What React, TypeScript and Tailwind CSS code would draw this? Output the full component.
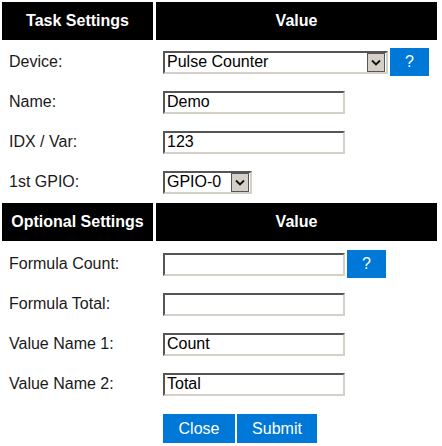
import type { ReactNode } from 'react'

const inset =
   'border-2 border-t-[#555] border-l-[#555] border-b-[#d4d0c8] border-r-[#d4d0c8] bg-white'

function Header({ left }: { left: string }) {
  return (
    <div className="grid grid-cols-[151px_281px] gap-x-[3px] h-[38px]">
      <div className="bg-black text-white font-bold flex items-center justify-center">{left}</div>
      <div className="bg-black text-white font-bold flex items-center justify-center">Value</div>
    </div>
  )
}

function Row({ label, children }: { label: string; children: ReactNode }) {
  return (
    <div className="grid grid-cols-[151px_281px] gap-x-[3px] h-[40px]">
      <div className="flex items-center px-[7px] text-[#1a1a1a]">{label}</div>
      <div className="flex items-center px-[7px]">{children}</div>
    </div>
  )
}

function TextBox({ value = '' }: { value?: string }) {
  return (
    <input
      readOnly
      value={value}
      className={`${inset} w-[182px] h-[23px] px-[2px] text-[16px] text-black outline-none`}
    />
  )
}

function Chevron() {
  return (
    <svg width="10" height="7" viewBox="0 0 10 7">
      <path d="M1 1.5 L5 5.5 L9 1.5" fill="none" stroke="#111" strokeWidth="1.8" />
    </svg>
  )
}

function Select({ value, width }: { value: string; width: string }) {
  return (
    <div className={`${inset} ${width} h-[23px] flex items-center justify-between`}>
      <span className="pl-[2px] text-black leading-none">{value}</span>
      <div className="w-[18px] h-[19px] mr-[1px] bg-[#d4d0c8] border border-[#555] flex items-center justify-center">
        <Chevron />
      </div>
    </div>
  )
}

function Blue({ children, className = '' }: { children: ReactNode; className?: string }) {
  return (
    <button className={`bg-[#0078d7] text-white flex items-center justify-center ${className}`}>
      {children}
    </button>
  )
}

export default function App() {
  return (
    <div
      className="w-[442px] h-[446px] bg-white pt-[2px] pl-[2px] text-[16px] overflow-hidden"
      style={{ fontFamily: '"Liberation Sans", Arial, sans-serif' }}
    >
      <Header left="Task Settings" />
      <div className="mt-[2px]">
        <Row label="Device:">
          <div className="flex items-center gap-[2px]">
            <Select value="Pulse Counter" width="w-[225px]" />
            <Blue className="w-[39px] h-[28px]">?</Blue>
          </div>
        </Row>
        <Row label="Name:">
          <TextBox value="Demo" />
        </Row>
        <Row label="IDX / Var:">
          <TextBox value="123" />
        </Row>
        <Row label="1st GPIO:">
          <Select value="GPIO-0" width="w-[89px]" />
        </Row>
      </div>
      <div className="mt-[1px]">
        <Header left="Optional Settings" />
      </div>
      <div className="mt-[3px]">
        <Row label="Formula Count:">
          <div className="flex items-center gap-[2px]">
            <TextBox />
            <Blue className="w-[39px] h-[28px]">?</Blue>
          </div>
        </Row>
        <Row label="Formula Total:">
          <TextBox />
        </Row>
        <Row label="Value Name 1:">
          <TextBox value="Count" />
        </Row>
        <Row label="Value Name 2:">
          <TextBox value="Total" />
        </Row>
      </div>
      <div className="grid grid-cols-[151px_281px] gap-x-[3px] mt-[10px]">
        <div />
        <div className="flex gap-[2px] px-[7px]">
          <Blue className="w-[72px] h-[29px]">Close</Blue>
          <Blue className="w-[80px] h-[29px]">Submit</Blue>
        </div>
      </div>
    </div>
  )
}
